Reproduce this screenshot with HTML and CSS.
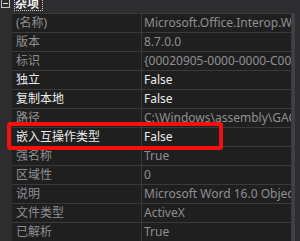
FILE: index.html
```html
<!DOCTYPE html>
<html>
<head>
<meta charset="utf-8">
<link rel="stylesheet" href="styles.css">
</head>
<body>
<div class="pg">
  <div class="cat">
    <span class="toggle"><span class="bar"></span></span>
    <span class="cat-name">杂项</span>
  </div>
  <div class="main">
    <div class="rows">
      <div class="k ro">(名称)</div><div class="v ro">Microsoft.Office.Interop.Word</div>
      <div class="k ro">版本</div><div class="v ro">8.7.0.0</div>
      <div class="k ro">标识</div><div class="v ro">{00020905-0000-0000-C000-000000000046}</div>
      <div class="k">独立</div><div class="v">False</div>
      <div class="k">复制本地</div><div class="v">False</div>
      <div class="k ro">路径</div><div class="v ro">C:\Windows\assembly\GAC_MSIL</div>
      <div class="k">嵌入互操作类型</div><div class="v">False</div>
      <div class="k ro">强名称</div><div class="v ro">True</div>
      <div class="k ro">区域性</div><div class="v ro">0</div>
      <div class="k ro">说明</div><div class="v ro">Microsoft Word 16.0 Object Library</div>
      <div class="k ro">文件类型</div><div class="v ro">ActiveX</div>
      <div class="k ro">已解析</div><div class="v ro">True</div>
    </div>
    <div class="scroll"><div class="thumb"></div></div>
  </div>
  <div class="mark"></div>
</div>
</body>
</html>
```
FILE: styles.css
```css
html, body {
  margin: 0;
  padding: 0;
  background: #2d2d30;
  overflow: hidden;
  width: 300px;
  height: 241px;
}
.pg {
  position: relative;
  display: flex;
  flex-direction: column;
  font-family: "Noto Sans", "Noto Sans CJK SC", sans-serif;
  font-size: 12px;
}
.cat {
  display: flex;
  align-items: center;
  height: 19px;
  margin-top: -6px;
  color: #f1f1f1;
}
.toggle {
  width: 7px;
  height: 7px;
  margin-left: 1px;
  border: 1px solid #c8c8c8;
  display: flex;
  align-items: center;
  justify-content: center;
}
.bar {
  width: 5px;
  height: 1px;
  background: #e0e0e0;
}
.cat-name {
  margin-left: 4px;
  font-weight: bold;
  line-height: 15px;
  padding: 0 4px 0 1px;
  outline: 1px dotted #d0d0d0;
  outline-offset: -1px;
}
.main {
  display: flex;
}
.rows {
  margin-left: 12px;
  width: 280px;
  display: grid;
  grid-template-columns: 129px 1fr;
  gap: 1px;
  padding: 1px;
  padding-left: 0;
  padding-bottom: 0;
  background: #3a3a3c;
}
.k, .v {
  height: 18px;
  line-height: 18px;
  background: #1f1f1f;
  white-space: nowrap;
  overflow: hidden;
  color: #ececec;
}
.k { padding-left: 4px; }
.v { padding-left: 2px; }
.ro { color: #8f8f93; }
.scroll {
  width: 8px;
  display: flex;
}
.thumb {
  width: 3px;
  background: #3f3f46;
}
.mark {
  position: absolute;
  left: 7px;
  top: 122px;
  width: 208px;
  height: 20px;
  border: 4px solid #f51010;
  border-radius: 3px;
}
```
